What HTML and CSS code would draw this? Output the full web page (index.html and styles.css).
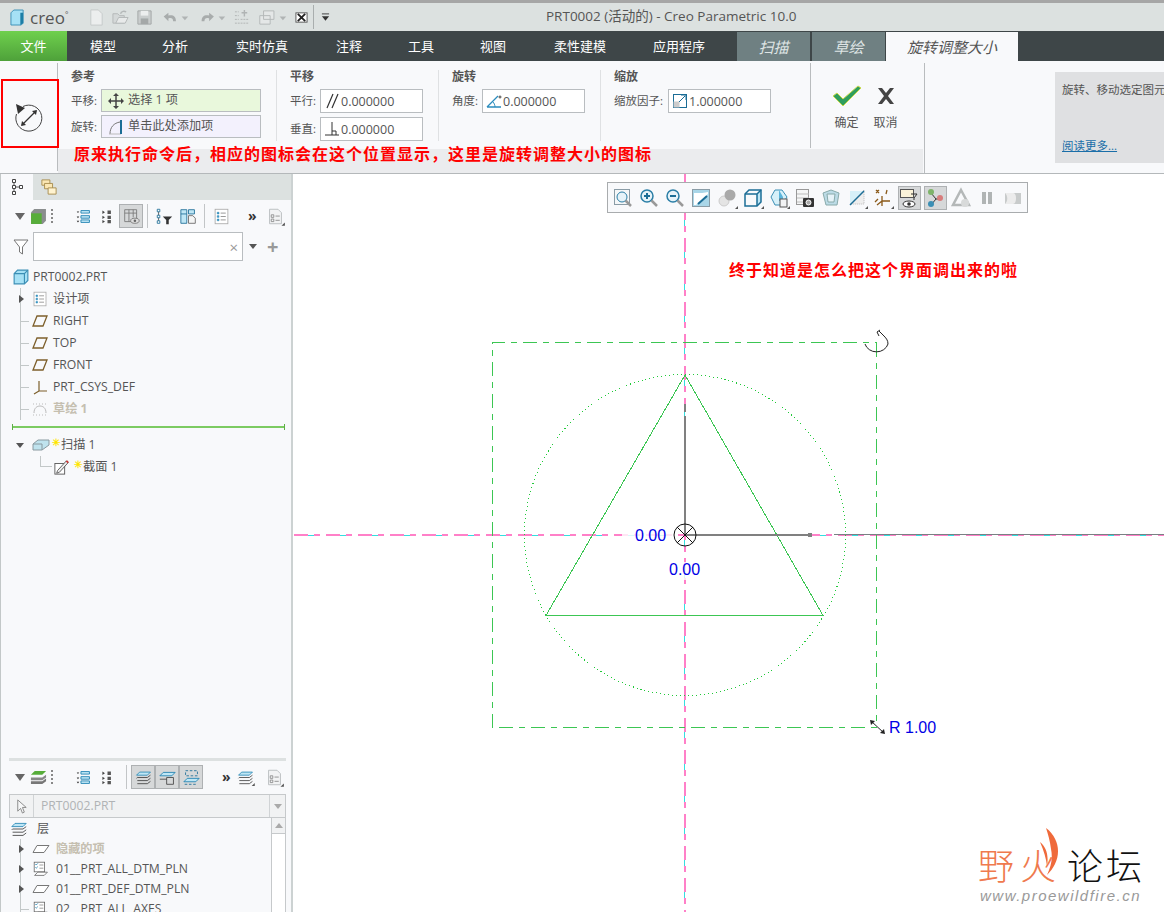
FILE: index.html
```html
<!DOCTYPE html>
<html lang="zh-CN">
<head>
<meta charset="utf-8">
<title>PRT0002 - Creo Parametric 10.0</title>
<link rel="stylesheet" href="styles.css">
</head>
<body>
<svg class="defs" width="0" height="0" aria-hidden="true">
  <symbol id="list" viewBox="0 0 20 20"><path d="M2 4l3 0-1.500 2zM2 10l3 0-1.500 2zM2 15l3 0-1.500 2z" fill="#333"/><path d="M7 3h10v3H7zM7 9h10v3H7zM7 14h10v3H7z" fill="#bfe6f5" stroke="#1b7fb0"/></symbol>
  <symbol id="list2" viewBox="0 0 20 20"><path d="M4 3l3 2-3 2zM4 9l3 2-3 2zM4 14l3 2-3 2z" fill="#444"/><path d="M10 3h4v4h-4zM10 9h4v4h-4zM10 14h4v4h-4z" fill="#555"/></symbol>
  <symbol id="doc" viewBox="0 0 20 20"><rect x="2.500" y="1.500" width="15" height="17" fill="#fff" stroke="#aaa"/><path d="M5 5h2v2H5zM5 9h2v2H5zM5 13h2v2H5z" fill="#4aa3cf" stroke="#1b7fb0" stroke-width=".6"/><path d="M9 6h6M9 10h6M9 14h6" stroke="#888"/></symbol>
  <symbol id="layers" viewBox="0 0 22 20"><path d="M6 3h14l-4 4H2z" fill="#bfe6f5" stroke="#1b7fb0"/><path d="M3 10h13l4-3M3 10l-1 1M3 14h13l4-3M3 18h13l4-3" fill="none" stroke="#333"/></symbol>
  <symbol id="sheet" viewBox="0 0 20 20"><path d="M3 1.500h10l4 4v13H3z" fill="#f2f3f4" stroke="#b5b8ba"/><path d="M5 8h3v3H5zM5 13h3v3H5z" fill="none" stroke="#888"/><path d="M10 9.500h5M10 14.500h5" stroke="#888"/></symbol>
  <symbol id="plane" viewBox="0 0 16 14"><path d="M5 2h10l-4 10H1z" fill="none" stroke="#7d5f2b" stroke-width="1.300"/></symbol>
  <symbol id="check" viewBox="0 0 20 20"><rect x="1.500" y="1.500" width="13" height="12" fill="#fff" stroke="#666"/><path d="M3 4l1 1 2-2M3 8l1 1 2-2" fill="none" stroke="#1b7fb0"/><path d="M8 5h5M8 9h5" stroke="#888"/><path d="M6 14h12l-4 4H2z" fill="#fff" stroke="#666"/></symbol>
  <symbol id="flat" viewBox="0 0 18 10"><path d="M5 1.500h12l-5 7H1z" fill="#fff" stroke="#777"/></symbol>
  <symbol id="mag" viewBox="0 0 20 20"><circle cx="8" cy="8" r="6" fill="#e6f3f9" stroke="#2a7ea6" stroke-width="1.500"/><path d="M12.500 12.500l5.500 5.500" stroke="#999" stroke-width="2.500"/></symbol>
</svg>
<div class="app">
  <header class="titlebar">
    <svg class="logo-cube" viewBox="0 0 16 18"><path d="M1 4l3-3h10v14l-2 2H1z" fill="#a6e1f5" stroke="#3b8fb5"/><path d="M11 4h3v11l-3 2z" fill="#1d7ea6"/></svg>
    <span class="brand">creo<sup>°</sup></span>
    <div class="quick">
      <svg viewBox="0 0 18 18"><path d="M3 1h8l4 4v12H3z" fill="#eceeee" stroke="#c6caca"/></svg>
      <svg viewBox="0 0 18 18"><path d="M1 15V5h5l2 2h5v8z" fill="#d4d8d8" stroke="#b4b8b8"/><path d="M4 15l3-6h10l-3 6z" fill="#e8eaea" stroke="#b4b8b8"/><path d="M9 5c1-3 4-3 6-2" fill="none" stroke="#b4b8b8" stroke-width="1.500"/></svg>
      <svg viewBox="0 0 18 18"><path d="M2 2h14v14H2z" fill="#c9cdcd" stroke="#a4a8a8"/><path d="M5 2h8v5H5z" fill="#eceeee"/><path d="M5 10h8v6H5z" fill="#a4a8a8"/></svg>
      <svg class="wide" viewBox="0 0 30 18"><path d="M3 8l5-4v3c5-1 8 1 8 6h-3c0-3-2-4-5-3v3z" fill="#a8acac"/><path d="M22 8h7l-3.500 4z" fill="#b0b4b4"/></svg>
      <svg class="wide" viewBox="0 0 30 18"><path d="M17 8l-5-4v3C7 6 4 8 4 13h3c0-3 2-4 5-3v3z" fill="#a8acac"/><path d="M22 8h7l-3.500 4z" fill="#b0b4b4"/></svg>
      <svg viewBox="0 0 18 18"><path d="M1 3h4M1 7h4M1 11h4M1 15h14M7 11h8" stroke="#b0b4b4" stroke-dasharray="2 1"/><path d="M11 1v7M8 4h6" stroke="#b0b4b4" stroke-width="1.500"/></svg>
      <svg class="wide" viewBox="0 0 30 18"><path d="M5 2h11v9H5zM1 7h11v9H1z" fill="#e4e7e7" stroke="#b4b8b8"/><path d="M22 8h7l-3.500 4z" fill="#b0b4b4"/></svg>
      <svg class="close" viewBox="0 0 14 14"><rect x="1" y="2" width="12" height="10" fill="#fff" stroke="#555"/><path d="M3 3l8 8M11 3l-8 8" stroke="#222" stroke-width="2"/></svg>
      <i class="bar-sep"></i>
      <svg class="drop" viewBox="0 0 10 10"><path d="M1 1h8" stroke="#333"/><path d="M1 3.500h8l-4 5z" fill="#333"/></svg>
    </div>
    <span class="title">PRT0002 (活动的) - Creo Parametric 10.0</span>
  </header>

  <nav class="tabs">
    <span class="tab file">文件</span>
    <span class="tab w72">模型</span>
    <span class="tab w72">分析</span>
    <span class="tab w102">实时仿真</span>
    <span class="tab w72">注释</span>
    <span class="tab w72">工具</span>
    <span class="tab w72">视图</span>
    <span class="tab w102">柔性建模</span>
    <span class="tab w94">应用程序</span>
    <span class="tab ctx first">扫描</span>
    <span class="tab ctx">草绘</span>
    <span class="tab active">旋转调整大小</span>
  </nav>

  <section class="ribbon">
    <div class="cmd-cell">
      <svg class="cmd-icon" viewBox="0 0 30 30"><path d="M9 3.500A13 13 0 1 1 2.500 11" fill="none" stroke="#444" stroke-width="1"/><path d="M2 1l9 4-7 6z" fill="#333"/><path d="M8 22L22 8" stroke="#333" stroke-width="1.200"/><path d="M23 7l-5 1 4 4zM7 23l5-1-4-4z" fill="#333"/></svg>
    </div>
    <div class="ribbon-mid">
      <div class="groups">
        <div class="group g1">
          <h4>参考</h4>
          <div class="row"><label>平移:</label><div class="collector move">
            <svg viewBox="0 0 16 16"><path d="M8 1v14M1 8h14" stroke="#444" stroke-width="1.500"/><path d="M8 0l3 3H5zM8 16l3-3H5zM0 8l3-3v6zM16 8l-3-3v6z" fill="#444"/></svg>选择 1 项</div></div>
          <div class="row"><label>旋转:</label><div class="collector rotate">
            <svg viewBox="0 0 16 16"><path d="M2 15C2 8 6 4 12 3" fill="none" stroke="#777"/><path d="M1 15h12" stroke="#bbb"/><path d="M13 1v14" stroke="#1b6d96" stroke-width="2"/></svg>单击此处添加项</div></div>
        </div>
        <div class="group g2">
          <h4>平移</h4>
          <div class="row tall"><label>平行:</label><div class="input">
            <svg viewBox="0 0 16 16"><path d="M3 15L9 1M8 15L14 1" stroke="#333" stroke-width="1.200"/></svg>0.000000</div></div>
          <div class="row tall"><label>垂直:</label><div class="input">
            <svg viewBox="0 0 16 16"><path d="M1 14h14M8 1v13M8 10h4v4" fill="none" stroke="#333"/></svg>0.000000</div></div>
        </div>
        <div class="group g3">
          <h4>旋转</h4>
          <div class="row tall"><label>角度:</label><div class="input">
            <svg viewBox="0 0 16 16"><path d="M1 14L12 3M1 14h14" stroke="#2b8cbd" stroke-width="1.300"/><path d="M9 14c0-2-1-4-2-5" fill="none" stroke="#2b8cbd"/><circle cx="14" cy="4" r="1" fill="none" stroke="#444"/></svg>0.000000</div></div>
        </div>
        <div class="group g4">
          <h4>缩放</h4>
          <div class="row tall"><label>缩放因子:</label><div class="input">
            <svg viewBox="0 0 16 16"><rect x="1.500" y="1.500" width="13" height="13" fill="none" stroke="#1b6d96"/><rect x="1.500" y="8.500" width="6" height="6" fill="#ccc"/><path d="M7 9l6-6M9 2h5v5" fill="none" stroke="#1b6d96"/></svg>1.000000</div></div>
        </div>
        <div class="group g5">
          <div class="action">
            <svg class="ok" viewBox="0 0 30 22"><path d="M1 11l4-3 6 6L26 1l3 2-18 18z" fill="#2f9e5e" stroke="#c9d94a"/></svg>
            <span>确定</span>
          </div>
          <div class="action">
            <svg class="no" viewBox="0 0 20 18"><path d="M2 1h4l4 5 4-5h4l-6 8 6 8h-4l-4-5-4 5H2l6-8z" fill="#444"/></svg>
            <span>取消</span>
          </div>
        </div>
      </div>
      <div class="strip"></div>
    </div>
    <div class="help-wrap">
      <div class="help">
        <p>旋转、移动选定图元</p>
        <a href="#more">阅读更多...</a>
      </div>
    </div>
    <div class="red-box"></div>
    <p class="note ribbon-note">原来执行命令后，相应的图标会在这个位置显示，这里是旋转调整大小的图标</p>
  </section>

  <div class="main">
    <aside class="side">
      <div class="side-tabs">
        <span class="side-tab on"><svg viewBox="0 0 12 16"><path d="M3 2v12M3 8h5" stroke="#555"/><path d="M1.500 .5h3v3h-3zM1.500 6.500h3v3h-3zM1.500 12.500h3v3h-3zM8.500 6.500h3v3h-3z" fill="#fff" stroke="#444"/></svg></span>
        <span class="side-tab"><svg viewBox="0 0 18 18"><path d="M1 1h9v6H1z" fill="#fbe7b4" stroke="#a58a4a"/><path d="M4 5h9v6H4z" fill="#fbe7b4" stroke="#a58a4a"/><path d="M8 10h9v7H8z" fill="#fff3d0" stroke="#a58a4a"/></svg></span>
      </div>
      <div class="side-top">
        <div class="tool-row">
          <i class="tri"></i>
          <svg class="ic" viewBox="0 0 16 16"><path d="M1 4l3-3h11v11l-3 3H1z" fill="#8a8e8e"/><rect x="1" y="5" width="10" height="10" fill="#57ad3a"/></svg>
          <i class="dots"></i>
          <svg class="ic sp1" viewBox="0 0 20 20"><use href="#list"/></svg>
          <svg class="ic sp2" viewBox="0 0 20 20"><use href="#list2"/></svg>
          <span class="pressed"><svg class="ic" viewBox="0 0 20 20"><path d="M2 2h14v14H2zM2 6h14M7 2v14M12 2v9" fill="none" stroke="#777"/><ellipse cx="14" cy="15" rx="5" ry="3" fill="#ddd" stroke="#777"/><circle cx="14" cy="15" r="1.500" fill="#666"/></svg></span>
          <i class="sep"></i>
          <svg class="ic" viewBox="0 0 20 20"><path d="M3 3v14" stroke="#555"/><path d="M1.500 1.500h3v3h-3zM1.500 8.500h3v3h-3zM1.500 15h3v3h-3z" fill="#fff" stroke="#1b6d96"/><path d="M8 10h11l-4 4v5h-3v-5z" fill="#333"/></svg>
          <svg class="ic sp3" viewBox="0 0 20 20"><path d="M1 2h7v16H1zM1 7h7M10 2h7v5h-7z" fill="#bfe6f5" stroke="#1b6d96"/><path d="M10 9h5l3 3v6h-8z" fill="#f4f5f5" stroke="#666"/></svg>
          <i class="sep narrow"></i>
          <svg class="ic" viewBox="0 0 20 20"><use href="#doc"/></svg>
          <span class="more">»</span>
          <svg class="ic tip" viewBox="0 0 20 20"><use href="#sheet"/><path d="M21 21h-4l4-4z" fill="#555"/></svg>
        </div>
        <div class="filter-row">
          <svg class="funnel" viewBox="0 0 16 16"><path d="M1 1h14L9.500 8v7l-3-2V8z" fill="#fff" stroke="#777"/></svg>
          <div class="search"><span class="clear">×</span></div>
          <i class="caret"></i>
          <span class="plus">+</span>
        </div>
        <div class="root"><svg class="ic16" viewBox="0 0 14 14"><path d="M1 4l3-3h9v9l-3 3H1z" fill="#a6e1f5" stroke="#3b8fb5"/><path d="M1 4h9v9M10 4l3-3" fill="none" stroke="#3b8fb5"/></svg>PRT0002.PRT</div>
        <ul class="tree">
          <li><span class="twig arrow"></span><svg class="ic16" viewBox="0 0 20 20"><use href="#doc"/></svg>设计项</li>
          <li><span class="twig"></span><svg class="ic16" viewBox="0 0 16 14"><use href="#plane"/></svg>RIGHT</li>
          <li><span class="twig"></span><svg class="ic16" viewBox="0 0 16 14"><use href="#plane"/></svg>TOP</li>
          <li><span class="twig"></span><svg class="ic16" viewBox="0 0 16 14"><use href="#plane"/></svg>FRONT</li>
          <li><span class="twig"></span><svg class="ic16" viewBox="0 0 16 16"><path d="M7 2v10M7 12h8M7 12l-5 3" stroke="#7d5f2b" stroke-width="1.200" fill="none"/></svg>PRT_CSYS_DEF</li>
          <li class="off"><span class="twig"></span><svg class="ic16" viewBox="0 0 16 16"><path d="M2 12c0-5 3-7 6-7s6 2 6 7" fill="none" stroke="#bbb"/><path d="M1 3h14M1 14h14" stroke="#bbb" stroke-dasharray="1 2"/></svg>草绘 1</li>
        </ul>
        <div class="insert"></div>
        <ul class="tree">
          <li class="fold"><span class="twig down"></span><svg class="ic18" viewBox="0 0 18 12"><path d="M1 5l5-4h11v5l-7 5H1z" fill="#bfe3ee" stroke="#8a9aa0"/><path d="M1 5h9v6" fill="none" stroke="#8a9aa0"/></svg><b class="star">✳</b>扫描 1</li>
          <li class="child"><span class="elbow"></span><svg class="ic18" viewBox="0 0 18 18"><rect x="1" y="5" width="11" height="12" fill="#fff" stroke="#555"/><path d="M4 13L14 2l2 2L6 15l-3 1z" fill="#eee" stroke="#555"/><path d="M14 2l2 2" stroke="#c33" stroke-width="2"/></svg><b class="star">✳</b>截面 1</li>
        </ul>
      </div>
      <div class="side-bottom">
        <div class="divider"></div>
        <div class="tool-row low">
          <i class="tri"></i>
          <svg class="ic" viewBox="0 0 18 16"><path d="M1 12h12l4-3v3l-4 3H1z" fill="#777"/><path d="M1 8h12l4-3v3l-4 3H1z" fill="#888"/><path d="M5 1h12l-4 4H1z" fill="#57ad3a"/></svg>
          <i class="dots"></i>
          <svg class="ic sp1" viewBox="0 0 20 20"><use href="#list"/></svg>
          <svg class="ic sp2" viewBox="0 0 20 20"><use href="#list2"/></svg>
          <i class="sep"></i>
          <span class="pressed group-first"><svg class="ic" viewBox="0 0 22 20"><use href="#layers"/></svg></span>
          <span class="pressed"><svg class="ic" viewBox="0 0 20 20"><path d="M5 4h14l-4 4H1z" fill="#bfe6f5" stroke="#1b7fb0"/><path d="M1 12h8M9 10h8v8H9z" fill="none" stroke="#444"/></svg></span>
          <span class="pressed"><svg class="ic" viewBox="0 0 20 20"><path d="M3 2h14v6H3z" fill="none" stroke="#1b6d96" stroke-dasharray="3 2"/><path d="M5 11h14l-4 4H1z" fill="#bfe6f5" stroke="#1b7fb0"/><path d="M2 18h14" stroke="#1b6d96" stroke-dasharray="3 2"/></svg></span>
          <span class="more">»</span>
          <svg class="ic tip" viewBox="0 0 22 20"><use href="#layers"/><path d="M23 21h-4l4-4z" fill="#555"/></svg>
          <svg class="ic tip last" viewBox="0 0 20 20"><use href="#sheet"/><path d="M21 21h-4l4-4z" fill="#555"/></svg>
        </div>
        <div class="selector">
          <span class="sel-arrow"><svg viewBox="0 0 12 16"><path d="M2 1v12l3-3 2 5 2-1-2-5h4z" fill="#f6f7f8" stroke="#888"/></svg></span>
          <span class="sel-name">PRT0002.PRT</span>
          <span class="sel-drop"><i class="caret pale"></i></span>
        </div>
        <div class="layer-wrap">
          <div class="layer-list">
            <div class="layer-head"><svg class="ic18" viewBox="0 0 22 20"><use href="#layers"/></svg>层</div>
            <ul class="layers">
              <li class="off"><span class="twig arrow"></span><svg class="ic18" viewBox="0 0 18 10"><use href="#flat"/></svg>隐藏的项</li>
              <li><span class="twig arrow"></span><svg class="ic18" viewBox="0 0 20 20"><use href="#check"/></svg>01__PRT_ALL_DTM_PLN</li>
              <li><span class="twig arrow"></span><svg class="ic18" viewBox="0 0 18 10"><use href="#flat"/></svg>01__PRT_DEF_DTM_PLN</li>
              <li><span class="twig"></span><svg class="ic18" viewBox="0 0 20 20"><use href="#check"/></svg>02__PRT_ALL_AXES</li>
            </ul>
          </div>
          <div class="scroll"><span class="scroll-up"></span><span class="scroll-track"></span></div>
        </div>
      </div>
    </aside>

    <div class="canvas">
      <svg class="drawing" viewBox="293 174 871 738">
        <g class="geo">
          <path class="pink" d="M685 174V912"/>
          <path class="cyan" d="M684.500 174V912"/>
          <path class="pink" d="M294 535H1164"/>
          <path class="cyan" d="M294 535.500H1164"/>
          <path class="veil" d="M622 533h52v4h-52zM683 562h4v18h-4z"/>
          <path class="trail" d="M834 534.500H1164"/>
          <path class="dash" d="M499 727.500H877M492.500 728V342.500H877M876.500 343V727"/>
          <circle class="dots-c" cx="685" cy="535" r="160.500"/>
          <path class="tri-l" d="M685 375L546 615.500H823Z"/>
          <path class="axis" d="M685 416V535H810"/>
          <path class="tick" d="M808 533h4v4h-4zM684 404h2v8h-2z"/>
        </g>
        <circle class="sym" cx="685" cy="535" r="11"/>
        <path class="sym" d="M677 527L693 543M693 527L677 543"/>
        <path class="handle" d="M865 344a12 11 0 0 0 23 0c0-4-2-6-5-9l-4-4M877 332l3-2M877 332l2 4"/>
        <path class="handle" d="M871 721L884 733"/>
        <path class="head" d="M870 720l5 1-4 4zM885 734l-5-1 4-4z"/>
        <text class="dim" x="635" y="541">0.00</text>
        <text class="dim" x="669" y="575">0.00</text>
        <text class="dim" x="889" y="733">R 1.00</text>
      </svg>
      <div class="view-bar">
        <svg viewBox="0 0 20 20"><rect x="1.500" y="1.500" width="15" height="15" fill="#f5f7f8" stroke="#8a9ca6"/><circle cx="9" cy="9" r="5" fill="#e6f3f9" stroke="#2a7ea6"/><path d="M12.500 12.500l5.500 5.500" stroke="#999" stroke-width="2.500"/></svg>
        <svg viewBox="0 0 20 20"><use href="#mag"/><path d="M5 8h6M8 5v6" stroke="#1b6d96" stroke-width="2"/></svg>
        <svg viewBox="0 0 20 20"><use href="#mag"/><path d="M5 8h6" stroke="#1b6d96" stroke-width="2"/></svg>
        <svg viewBox="0 0 20 20"><rect x="1.500" y="1.500" width="17" height="17" fill="#a9d6e8" stroke="#8a9ca6"/><path d="M3 5c6 0 11 0 14-1v2L5 17H3z" fill="#fff"/><path d="M7 16L16 8" stroke="#1b6d96" stroke-width="2"/></svg>
        <svg viewBox="0 0 20 20"><circle cx="7" cy="13" r="5" fill="#e4e4e4" stroke="#ccc"/><circle cx="13" cy="7" r="5.500" fill="#a9a9a9"/><path d="M21 21h-3l3-3z" fill="#555"/></svg>
        <svg viewBox="0 0 20 20"><path d="M14 6l4-4v12l-4 4z" fill="#bfe6f5"/><path d="M2 6l4-4h12v12l-4 4H2z" fill="none" stroke="#1b6d96" stroke-width="1.500"/><path d="M2 6h12v12M14 6l4-4" fill="none" stroke="#1b6d96" stroke-width="1.500"/><path d="M21 21h-3l3-3z" fill="#555"/></svg>
        <svg viewBox="0 0 20 20"><path d="M2 9l4-7h7l5 7-5 8H6z" fill="#d6f0f9" stroke="#3b8fb5"/><path d="M10 2l4 7v4h-4z" fill="#5bb4da"/><rect x="11" y="11" width="7" height="8" fill="#f2f3f4" stroke="#555"/><path d="M21 21h-3l3-3z" fill="#555"/></svg>
        <svg viewBox="0 0 20 20"><rect x="1.500" y="1.500" width="12" height="15" fill="#f5f6f6" stroke="#999"/><path d="M2 6h12M2 10h12M2 14h12" stroke="#bbb"/><rect x="8" y="10" width="11" height="9" rx="1" fill="#333"/><circle cx="13.500" cy="14.500" r="2.500" fill="#aaa" stroke="#fff"/></svg>
        <svg viewBox="0 0 20 20"><path d="M2 5l8-3 8 3-2 12H5z" fill="#bcdbe6" stroke="#8aa"/><path d="M6 6l8 0-1 8H7z" fill="#e6f3f8" stroke="#8aa"/></svg>
        <svg viewBox="0 0 20 20"><path d="M3 16L17 2v14z" fill="#eee" stroke="#bbb" stroke-dasharray="1 1"/><path d="M3 3h13L3 16z" fill="#d6f0f9"/><path d="M3 17L17 3" stroke="#1b6d96" stroke-width="1.500"/><path d="M21 21h-3l3-3z" fill="#555"/></svg>
        <svg viewBox="0 0 20 20"><path d="M3 2l3 3M6 2L3 5M14 2l-1 4M2 14l3-3M9 8v10M9 13h8M9 13l-5 4" stroke="#8a5a1a" stroke-width="1.300" fill="none"/><path d="M21 21h-3l3-3z" fill="#555"/></svg>
        <span class="pressed"><svg viewBox="0 0 20 20"><rect x="1.500" y="1.500" width="13" height="8" fill="#fbf3d9" stroke="#555"/><path d="M12 6h6l-3 4v2" fill="none" stroke="#333"/><ellipse cx="10" cy="16" rx="6" ry="3" fill="#fff" stroke="#333"/><circle cx="10" cy="16" r="1.800" fill="#333"/></svg></span>
        <span class="pressed"><svg viewBox="0 0 20 20"><path d="M6 5l5 6-5 6M11 11h6" stroke="#333" fill="none"/><circle cx="6" cy="4" r="3" fill="#7eb36a"/><circle cx="6" cy="16" r="3" fill="#3b8fb5"/><circle cx="15" cy="10" r="3" fill="#d87c7c"/></svg></span>
        <svg viewBox="0 0 20 20"><path d="M10 2L18 17H2z" fill="none" stroke="#b4b8b8" stroke-width="2.500"/><circle cx="14" cy="15" r="4" fill="#d8dada"/></svg>
        <svg viewBox="0 0 20 20"><path d="M5 4h4v12H5zM11 4h4v12h-4z" fill="#b0b4b4"/></svg>
        <svg viewBox="0 0 20 20"><path d="M2 5h16v11H2z" fill="#c8cbcb"/><path d="M2 5h8c2 0 3 2 3 5s-1 6-3 6H2c3-3 3-8 0-11z" fill="#ececec"/></svg>
      </div>
      <p class="note canvas-note">终于知道是怎么把这个界面调出来的啦</p>
      <div class="watermark">
        <svg class="flame" viewBox="0 0 20 50"><path d="M6 0c12 9 15 24 9 36-2 4-5 8-8 11 4-9 6-16 4-26C10 13 8 6 6 0zM0 14c6 5 9 13 7 24-1-8-3-15-7-24z" fill="#ef6a3b"/></svg>
        <div class="wm-name"><span class="ye">野</span><span class="huo">火</span><span class="lun">论坛</span></div>
        <div class="wm-url">www.proewildfire.cn</div>
      </div>
    </div>
  </div>
</div>
</body>
</html>
```

FILE: styles.css
```css
* { box-sizing: border-box; }
html, body { margin: 0; height: 912px; overflow: hidden; background: #fff; }
body { font: 12.200px/1.2 "Open Sans", "Noto Sans CJK SC", sans-serif; color: #555; }
ul { list-style: none; margin: 0; padding: 0; }
h4, p { margin: 0; }
.defs { position: absolute; }
.app { width: 1164px; height: 912px; display: flex; flex-direction: column; overflow: hidden; }

/* title bar */
.titlebar { height: 31px; flex: none; display: flex; align-items: center; background: #dce1e0; border-top: 3px solid #a6a6a6; padding-left: 10px; position: relative; }
.logo-cube { width: 15px; height: 17px; }
.brand { font: 17px/1 "Open Sans", sans-serif; color: #555; margin-left: 5px; width: 41px; }
.brand sup { font-size: 8px; vertical-align: 7px; line-height: 0; }
.quick { display: flex; align-items: center; margin-left: 17px; gap: 7px; }
.quick svg { width: 17px; height: 17px; flex: none; }
.quick svg.wide { width: 30px; }
.quick svg.close { width: 13px; height: 13px; }
.quick svg.drop { width: 9px; height: 9px; }
.bar-sep { width: 1px; height: 24px; background: #a9aeae; margin-left: -2px; }
.title { position: absolute; left: 546px; top: 5px; font-size: 13.500px; color: #555; white-space: nowrap; }

/* tabs */
.tabs { height: 30px; flex: none; display: flex; background: #3e4648; color: #fff; font-size: 13px; line-height: 30px; }
.tab { text-align: center; flex: none; }
.file { width: 67px; background: linear-gradient(#6fd04d, #4ea13a); }
.w72 { width: 72px; }
.w102 { width: 102px; }
.w94 { width: 96px; }
.ctx { width: 73px; background: #6f8082; color: #dfe5e5; font-style: italic; font-size: 15px; margin-left: 2px; margin-top: 1px; }
.active { width: 132px; background: #f8f9fb; color: #555; font-style: italic; font-size: 15px; margin-left: 1px; margin-top: 1px; }
.tabs .ctx.first { margin-left: 10px; }

/* ribbon */
.ribbon { height: 113px; flex: none; display: flex; background: #f8f9fb; border-bottom: 1px solid #b4b8ba; position: relative; }
.cmd-cell { width: 58px; flex: none; display: flex; align-items: center; justify-content: center; padding-top: 1px; margin-top: 2px; margin-bottom: 2px; border-right: 1px solid #b9bcbe; }
.cmd-icon { width: 30px; height: 30px; }
.ribbon-mid { width: 867px; flex: none; display: flex; flex-direction: column; border-right: 1px solid #b9bcbe; margin: 2px 0 0; }
.groups { flex: 1; display: flex; align-items: flex-start; }
.strip { height: 24px; background: #ebecee; margin-right: 1px; flex: none; }
.group { height: 71px; margin-top: 7px; padding-left: 13px; border-right: 1px solid #dfe1e3; flex: none; }
.g1 { width: 219px; }
.g2 { width: 162px; }
.g3 { width: 162px; }
.g4 { width: 210px; height: 85px; margin-top: 0; padding-top: 7px; border-right-color: #b9bcbe; }
.g5 { width: 113px; height: 85px; margin-top: 0; border: 0; padding: 0; display: flex; justify-content: flex-start; }
h4 { font-size: 12px; font-weight: 700; line-height: 14px; height: 14px; color: #555; margin-bottom: 5px; }
.row { display: flex; align-items: center; height: 23px; margin-bottom: 3px; white-space: nowrap; }
.row.tall { height: 24px; margin-bottom: 4px; }
label { width: 30px; flex: none; font-size: 11.500px; }
.g4 label { width: 54px; }
.collector, .input { height: 100%; border: 1px solid #b9bdc0; display: flex; align-items: center; color: #555; }
.collector { width: 160px; padding-left: 6px; }
.collector svg { width: 16px; height: 16px; margin-right: 4px; }
.move { background: #e9f8dc; }
.rotate { background: #f3f1fd; }
.input { width: 103px; background: #fff; padding-left: 3px; font-size: 12.500px; }
.input svg { width: 16px; height: 16px; margin-right: 1px; }
.action { width: 39px; display: flex; flex-direction: column; align-items: center; font-size: 12px; color: #555; padding-top: 22px; }
.action:first-child { margin-left: 16px; }
.action svg { height: 22px; }
.ok { width: 30px; }
.no { width: 20px; }
.action span { margin-top: 9px; }
.help-wrap { flex: 1; padding: 11px 0 0 130px; }
.help { height: 91px; background: #dfe0e2; padding: 11px 0 0 7px; font-size: 11.500px; white-space: nowrap; overflow: hidden; position: relative; }
.help a { position: absolute; left: 7px; bottom: 10px; color: #1a6ea8; }
.red-box { position: absolute; left: 1px; top: 18px; width: 58px; height: 69px; border: 2px solid #f00; }
.note { position: absolute; color: #f00; font-size: 16px; font-weight: 700; letter-spacing: 1px; white-space: nowrap; line-height: 20px; font-family: "Noto Sans CJK SC", sans-serif; }
.ribbon-note { left: 74px; top: 82px; }

/* main */
.main { flex: 1; display: flex; min-height: 0; }
.side { width: 293px; flex: none; background: #f8f9fb; border-left: 1px solid #c3c8c8; border-right: 2px solid #ccd2d2; display: flex; flex-direction: column; }
.side-tabs { height: 26px; flex: none; display: flex; background: #dce1e0; }
.side-tab { width: 32px; display: flex; align-items: center; justify-content: center; }
.side-tab svg { width: 16px; height: 16px; }
.side-tab.on { background: #f8f9fb; }
.side-top { height: 558px; flex: none; }
.side-bottom { flex: 1; min-height: 0; }
.tool-row { height: 26px; display: flex; align-items: center; padding-left: 14px; margin-top: 3px; }
.tri { width: 0; height: 0; border: 5px solid transparent; border-top: 7px solid #666; border-bottom: 0; flex: none; }
.ic { width: 17px; height: 17px; flex: none; }
.tool-row > .ic:nth-of-type(1) { margin-left: 5px; }
.dots { width: 2px; height: 15px; margin: 0 0 0 4px; background: repeating-linear-gradient(#888 0 2px, transparent 2px 4px); flex: none; }
.sp1 { margin-left: 22px; }
.sp2 { margin-left: 7px; margin-right: 3px; }
.sp3 { margin-left: 7px; }
.pressed { width: 24px; height: 24px; background: #d6d8d9; border: 1px solid #aeb1b3; display: flex; align-items: center; justify-content: center; flex: none; }
.pressed .ic { margin: 0; }
.sep { width: 1px; height: 24px; background: #c2c5c7; margin: 0 8px 0 4px; flex: none; }
.sep.narrow { margin-left: 7px; }
.more { font: 700 14px/1 "Open Sans", sans-serif; color: #333; margin: 0 10px 0 18px; }
.tip { overflow: visible; }
.filter-row { height: 29px; display: flex; align-items: center; padding-left: 12px; margin-top: 3px; }
.funnel { width: 16px; height: 16px; flex: none; margin-right: 4px; }
.search { width: 210px; height: 29px; background: #fff; border: 1px solid #b9bdc0; display: flex; align-items: center; justify-content: flex-end; padding-right: 4px; }
.clear { font-size: 15px; color: #999; }
.caret { width: 0; height: 0; border: 4px solid transparent; border-top: 5px solid #555; border-bottom: 0; margin-left: 6px; flex: none; }
.caret.pale { border-top-color: #aaa; margin: 0; }
.plus { font: 700 20px/1 "Open Sans", sans-serif; color: #999; margin-left: 10px; }
.root { height: 22px; display: flex; align-items: center; padding-left: 12px; margin-top: 5px; }
.ic16 { width: 16px; height: 16px; margin-right: 5px; flex: none; }
.ic18 { width: 18px; height: 16px; margin-right: 5px; flex: none; }
.root .ic16 { margin-right: 4px; }
.tree li { height: 22px; display: flex; align-items: center; }
.twig { width: 12px; height: 100%; margin-left: 19px; border-left: 1px solid #c3c8c8; position: relative; flex: none; }
.twig::after { content: ""; position: absolute; left: 0; top: 50%; width: 8px; border-top: 1px solid #c3c8c8; }
.twig.arrow::after { width: 0; height: 0; border: 4px solid transparent; border-left: 5px solid #555; border-right: 0; left: -2px; top: calc(50% - 4px); }
.twig.down { border-left: 0; }
.twig.down::after { width: 0; height: 0; border: 4px solid transparent; border-top: 5px solid #555; border-bottom: 0; left: -4px; top: calc(50% - 2px); }
.off { color: #c5bfb0; font-weight: 700; }
.insert { height: 2px; margin: 6px 6px 6px 11px; background: #7ccb62; position: relative; }
.insert::before, .insert::after { content: ""; position: absolute; top: -2px; width: 1px; height: 6px; background: #5dae44; }
.insert::before { left: 0; }
.insert::after { right: 0; }
.fold .ic18 { margin-right: 2px; }
.star { color: #ffe600; font-size: 10px; font-weight: 700; align-self: flex-start; margin-top: 2px; width: 9px; }
.child .ic18 { margin-right: 3px; }
.elbow { width: 12px; height: 11px; margin: -11px 1px 0 39px; border-left: 1px solid #c3c8c8; border-bottom: 1px solid #c3c8c8; flex: none; }
.divider { height: 3px; margin: 0 5px 0 8px; background: #dde1e1; }
.tool-row.low { margin-top: 3px; height: 26px; }
.low .sep { margin: 0 4px 0 7px; }
.low .pressed { width: 24px; }
.low .more { margin: 0 6px 0 19px; }
.low .last { margin-left: 12px; }
.selector { height: 24px; margin: 4px 5px 0 8px; border: 1px solid #c6c9cb; display: flex; background: #f1f2f3; color: #b0b3b5; }
.sel-arrow { width: 24px; display: flex; align-items: center; justify-content: center; border-right: 1px solid #d0d3d5; }
.sel-arrow svg { width: 13px; height: 15px; }
.sel-name { flex: 1; padding-left: 7px; line-height: 22px; }
.sel-drop { width: 16px; border-left: 1px solid #d0d3d5; display: flex; align-items: center; justify-content: center; }
.layer-wrap { display: flex; margin: 0 5px 0 9px; }
.layer-list { flex: 1; min-width: 0; }
.layer-head { height: 20px; display: flex; align-items: center; margin-top: 1px; }
.layer-head .ic18 { margin-right: 9px; }
.layers li { height: 20px; display: flex; align-items: center; }
.layers .twig { margin-left: 10px; }
.layers .ic18 { margin-right: 6px; }
.scroll { width: 15px; flex: none; display: flex; flex-direction: column; border-left: 1px solid #c6c9cb; border-right: 1px solid #c6c9cb; height: 100px; background: #fff; }
.scroll-up { height: 16px; background: #f1f2f3; border-bottom: 1px solid #c6c9cb; position: relative; }
.scroll-up::after { content: ""; position: absolute; left: 3px; top: 5px; border: 4px solid transparent; border-bottom: 5px solid #aaa; border-top: 0; }
.scroll-track { flex: 1; }

/* canvas */
.canvas { flex: 1; position: relative; background: #fff; overflow: hidden; }
.drawing { display: block; width: 871px; height: 738px; }
.geo { shape-rendering: crispEdges; fill: none; }
.pink { stroke: #ff80c8; stroke-width: 2; stroke-dasharray: 14 6 6 6; }
.cyan { stroke: #33dfe0; stroke-width: 1; stroke-dasharray: 6 26; stroke-dashoffset: -14; }
.veil { fill: #fff; opacity: .8; }
.trail { stroke: #7a8084; stroke-width: 1; }
.dash { stroke: #3cc653; stroke-width: 1; stroke-dasharray: 14 6 6 6; }
.dots-c { stroke: #22c93a; stroke-width: 1; stroke-dasharray: 1 3; }
.tri-l { stroke: #3cc653; stroke-width: 1; }
.axis { stroke: #808080; stroke-width: 2; }
.tick { fill: #808080; }
.sym { fill: none; stroke: #111; stroke-width: 1; }
.handle { fill: none; stroke: #222; stroke-width: 1; }
.head { fill: #222; }
.dim { fill: #0000e6; font: 16px "Liberation Sans", sans-serif; }
.view-bar { position: absolute; left: 314px; top: 8px; width: 421px; height: 31px; background: #f8f9fb; border: 1px solid #a9acae; display: flex; align-items: center; padding-left: 2px; }
.view-bar svg { overflow: visible; }
.view-bar > svg { width: 20px; height: 20px; margin: 0 3px; flex: none; }
.view-bar .pressed { width: 23px; height: 24px; margin: 0 1.500px; }
.view-bar .pressed svg { width: 20px; height: 20px; }
.canvas-note { left: 436px; top: 85px; }
.watermark { position: absolute; left: 685px; top: 651px; width: 170px; height: 80px; }
.flame { position: absolute; left: 62px; top: 3px; width: 20px; height: 50px; }
.wm-name { position: absolute; left: 0; top: 17px; white-space: nowrap; font: 300 36px/44px "Noto Sans CJK SC", sans-serif; display: flex; }
.ye, .huo { color: #ef7a4e; }
.huo { margin-left: 6px; }
.lun { color: #111; margin-left: 11px; letter-spacing: 3px; }
.wm-url { position: absolute; left: 2px; top: 62px; font: italic 15px/18px "Liberation Sans", sans-serif; color: #999; letter-spacing: 1.500px; white-space: nowrap; }
```
